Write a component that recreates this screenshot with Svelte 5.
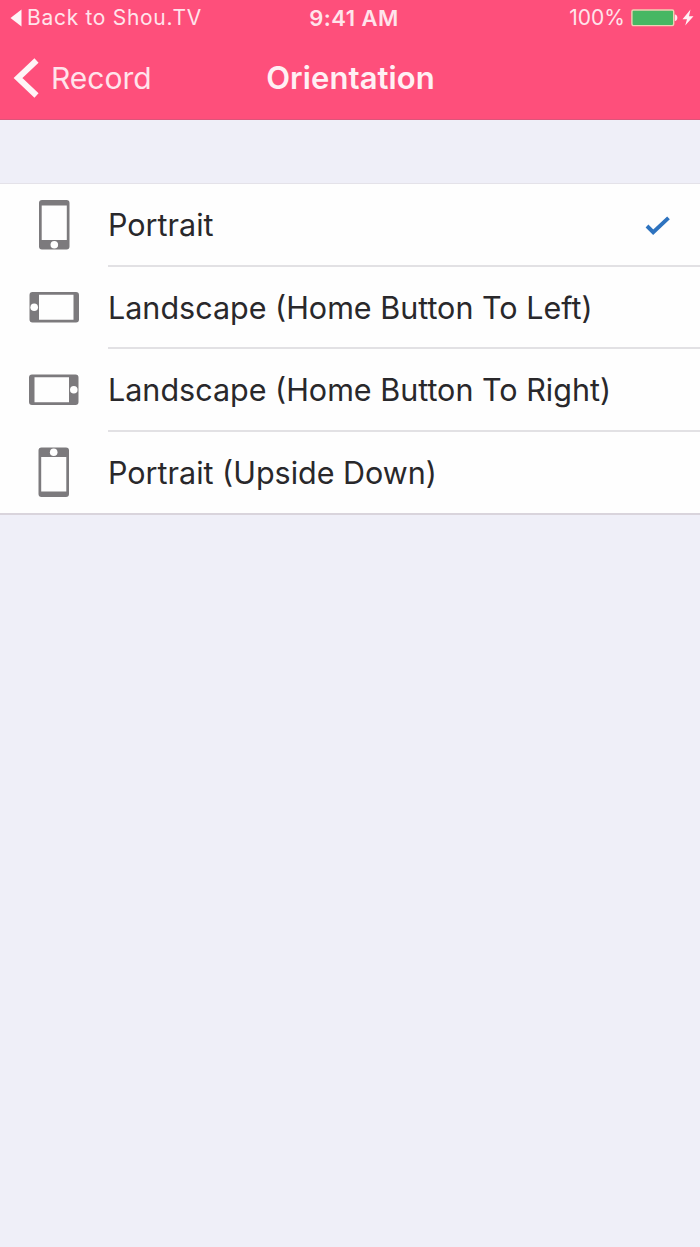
<script>
  const options = [
    { label: 'Portrait', angle: 0, selected: true },
    { label: 'Landscape (Home Button To Left)', angle: 90 },
    { label: 'Landscape (Home Button To Right)', angle: -90 },
    { label: 'Portrait (Upside Down)', angle: 180 }
  ];
</script>

<div class="screen">
  <header>
    <div class="status">
      <div class="return">
        <svg width="12" height="18" viewBox="0 0 12 18"><path d="M11.500 0.5V17.500L0.500 9Z" fill="#fff4f7" /></svg>
        <span>Back to Shou.TV</span>
      </div>
      <div class="time">9:41 AM</div>
      <div class="power">
        <span>100%</span>
        <svg width="64" height="20" viewBox="0 0 64 20">
          <rect x="0.900" y="2" width="41.800" height="15.600" rx="1.500" fill="#47b763" stroke="#efd0b4" stroke-width="1.400" />
          <path d="M43.800 6.500c3.400 .3 3.400 6.200 0 6.500Z" fill="#ffe5ec" />
          <path d="M59.500 1.500L51.500 11.200H56L54.200 17.500L62.500 8.200H58Z" fill="#fff0f4" />
        </svg>
      </div>
    </div>
    <nav>
      <div class="back">
        <svg width="26" height="40" viewBox="0 0 26 40"><path d="M23.500 2.500L5 20L23.500 37.500" fill="none" stroke="#fff4f7" stroke-width="6" /></svg>
        <span>Record</span>
      </div>
      <h1>Orientation</h1>
    </nav>
  </header>

  <main>
    {#each options as option}
      <div class="row">
        <div class="icon">
          <svg width="32" height="52" viewBox="0 0 32 52" style:transform={`rotate(${option.angle}deg)`}>
            <path fill-rule="evenodd" fill="#7c7a7d" d="M4 1H28.500Q31.500 1 31.500 4V47.500Q31.500 50.500 28.500 50.500H4Q1 50.500 1 47.500V4Q1 1 4 1ZM3.700 6.500V41H28.800V6.500Z" />
            <circle cx="16.300" cy="45.800" r="3.800" fill="#fff" />
          </svg>
        </div>
        <div class="content">
          <span class="label">{option.label}</span>
          {#if option.selected}
            <svg width="26" height="20" viewBox="0 0 26 20"><path d="M2 11L8.200 17.200L23.500 2.800" fill="none" stroke="#2e73bf" stroke-width="3.900" /></svg>
          {/if}
        </div>
      </div>
    {/each}
  </main>
</div>

<style>
  :global(body) { background: #efeff8; }
  .screen {
    min-height: 1247px;
    background: #efeff8;
    font-family: Inter, "Liberation Sans", sans-serif;
    overflow: hidden;
  }
  svg { display: block; flex: none; }
  header {
    box-sizing: border-box;
    height: 120px;
    background: #fe4f7b;
    border-bottom: 1px solid #dc557a;
    color: #ffe4eb;
  }
  .status {
    display: grid;
    grid-template-columns: 1fr auto 1fr;
    height: 36px;
    padding: 0 5px 0 10px;
    align-items: center;
    font-size: 21px;
    line-height: 36px;
    white-space: nowrap;
  }
  .return { display: flex; align-items: center; gap: 5px; letter-spacing: 0.7px; }
  .time { font-size: 22px; font-weight: 600; letter-spacing: 0.5px; padding-left: 3px; }
  .power { display: flex; align-items: center; justify-content: flex-end; gap: 6px; }
  nav {
    display: grid;
    grid-template-columns: 1fr auto 1fr;
    align-items: center;
    height: 83px;
    padding: 0 12px 0 13px;
    font-size: 30px;
  }
  .back { display: flex; align-items: center; gap: 12px; }
  h1 { margin: 0; padding-bottom: 1px; font-size: 31px; font-weight: 600; letter-spacing: 0.1px; color: #fff0f4; }
  main {
    margin-top: 63px;
    border-top: 1px solid #e4e2e9;
    border-bottom: 2px solid #d9d4dc;
    background: #fefefe;
  }
  .row { display: flex; height: 82.500px; }
  .row:last-child { height: 81.500px; }
  .icon { width: 108px; display: flex; align-items: center; justify-content: center; }
  .row:nth-child(2) .icon, .row:nth-child(3) .icon { height: 81px; }
  .content {
    flex: 1;
    display: flex;
    align-items: center;
    justify-content: space-between;
    padding: 1px 29px 0 0;
    border-bottom: 2px solid #e2e1e4;
  }
  .row:last-child .content { border-bottom: 0; padding-top: 0; }
  .label { font-size: 30.500px; color: #29282b; white-space: nowrap; }
</style>
